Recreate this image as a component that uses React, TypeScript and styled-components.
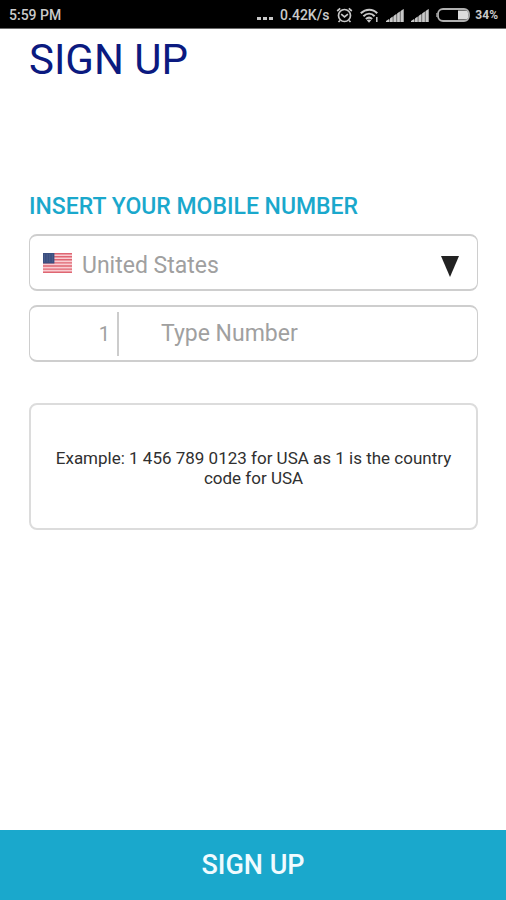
import React, { useState } from "react";
import styled, { createGlobalStyle } from "styled-components";

const GlobalStyle = createGlobalStyle`
  *, *::before, *::after { box-sizing: border-box; }
  body {
    margin: 0;
    background: #fff;
    font-family: Roboto, "Liberation Sans", sans-serif;
  }
`;

const Screen = styled.div`
  display: flex;
  flex-direction: column;
  min-height: 100vh;
  background: #fff;
`;

const StatusBar = styled.header`
  display: flex;
  align-items: center;
  justify-content: space-between;
  height: 29px;
  padding: 2px 8px 0 9px;
  border-bottom: 1px solid #6a6a6a;
  background: #000;
  color: #cacaca;
  font-size: 14px;
  font-weight: 500;
  line-height: 16px;
`;

const StatusGroup = styled.div`
  display: flex;
  align-items: center;
  gap: 7px;
`;

const StatusIcon = styled.svg`
  display: block;
  flex: none;
`;

const BatteryGroup = styled.div`
  display: flex;
  align-items: center;
  gap: 4px;
  font-size: 12px;
  font-weight: 700;
`;

const Content = styled.main`
  display: flex;
  flex: 1;
  flex-direction: column;
  padding: 0 28px 0 29px;
`;

const Title = styled.h1`
  margin: 5px 0 0;
  color: #0b1a80;
  font-size: 42px;
  font-weight: 400;
  line-height: 52px;
`;

const Form = styled.form`
  display: flex;
  flex-direction: column;
  margin-top: 105px;
`;

const SectionTitle = styled.h2`
  margin: 0;
  color: #1aa8cc;
  font-size: 23px;
  font-weight: 500;
  line-height: 32px;
`;

const Field = styled.div`
  display: flex;
  align-items: center;
  height: 57px;
  margin-top: 14px;
  padding: 0 18px 0 13px;
  border: solid #cecece;
  border-width: 2px 1px;
  border-radius: 8px;
`;

const CountryField = styled(Field)`
  margin-top: 11px;
`;

const CountrySelect = styled.select`
  flex: 1;
  min-width: 0;
  height: 52px;
  margin-left: 10px;
  padding: 6px 0 0;
  border: 0;
  outline: 0;
  appearance: none;
  background: transparent;
  color: #a0a0a0;
  font: 400 23px/32px Roboto, "Liberation Sans", sans-serif;
`;

const TextInput = styled.input`
  min-width: 0;
  height: 44px;
  padding: 0;
  border: 0;
  outline: 0;
  background: transparent;
  color: #a0a0a0;
  font: 400 23px/32px Roboto, "Liberation Sans", sans-serif;

  &::placeholder {
    color: #a0a0a0;
    opacity: 1;
  }
`;

const CodeInput = styled(TextInput)`
  width: 76px;
  padding-right: 7px;
  border-right: 2px solid #ccc;
  font-size: 20px;
  text-align: right;
`;

const NumberInput = styled(TextInput)`
  flex: 1;
  margin-left: 42px;
`;

const Example = styled.p`
  display: flex;
  align-items: center;
  justify-content: center;
  min-height: 127px;
  margin: 41px 0 0;
  padding: 2px 24px 0;
  border: 2px solid #dcdcdc;
  border-radius: 8px;
  color: #303030;
  font-size: 17px;
  line-height: 20px;
  text-align: center;
`;

const SubmitButton = styled.button`
  width: 100%;
  height: 70px;
  border: 0;
  background: #1aa8cc;
  color: #f0fbff;
  font: 500 27px/32px Roboto, "Liberation Sans", sans-serif;
  cursor: pointer;
`;

const AlarmIcon = () => (
  <StatusIcon width="17" height="17" viewBox="0 0 17 17" fill="none" stroke="#c8c8c8" strokeWidth="1.7" aria-hidden="true">
    <circle cx="8.5" cy="8.5" r="6" />
    <path d="M1.2 4 4.2 1.4M15.8 4l-3-2.6M5.2 7.2l3.3 2.7 3.4-2.7M4 13.500l-1.500 1.500M13 13.500l1.500 1.500" />
  </StatusIcon>
);

const WifiIcon = () => (
  <StatusIcon width="19" height="15" viewBox="0 0 19 15" fill="none" stroke="#c8c8c8" strokeWidth="2.1" aria-hidden="true">
    <path d="M.8 5.200c5-4.700 12-4.700 16.400 0M3.400 8.200c3.500-3.300 8-3.300 11.200 0M5.900 11c2-1.800 4.300-1.800 6.200 0" />
    <path d="M6.800 12.200q2.200-1.600 4.400 0L9 14.800z" fill="#c8c8c8" stroke="none" />
    <path d="M16.800 9v5" strokeWidth="1.500" />
  </StatusIcon>
);

const SignalIcon = () => (
  <StatusIcon width="18" height="13" viewBox="0 0 18 13" fill="#c8c8c8" aria-hidden="true">
    <path d="M0 13 17.600 0v13z" fill="#6c6c6c" />
    <path d="M0 13V12l3-2v3zM4 13V9.500l2.600-1.900V13zM7.600 13V7l2.600-1.900V13zM11.200 13V4.500l2.600-1.900V13zM14.800 13V2L17.600 0v13z" />
  </StatusIcon>
);

const BatteryIcon = () => (
  <StatusIcon width="35" height="14" viewBox="0 0 35 14" aria-hidden="true">
    <rect x="2" y="1" width="31" height="12" rx="5" fill="#000" stroke="#b0b0b0" strokeWidth="1.8" />
    <path d="M22 2.500h7.500q2.500 0 2.500 2v5q0 2-2.500 2H22z" fill="#ddd" />
    <path d="M.2 5h1.800v4H.2z" fill="#999" />
  </StatusIcon>
);

const DotsIcon = () => (
  <StatusIcon width="16" height="13" viewBox="0 0 16 13" fill="#c8c8c8" aria-hidden="true">
    <path d="M0 8h4v3H0zM6 8h4v3H6zM12 8h4v3h-4z" />
  </StatusIcon>
);

const FlagIcon = () => (
  <StatusIcon width="29" height="20" viewBox="0 0 28 20" preserveAspectRatio="none" aria-hidden="true">
    <path fill="#f9cdd2" d="M0 0h28v20H0z" />
    <path
      stroke="#df6672"
      strokeWidth="1.4"
      d="M0 .8h28M0 3.800h28M0 6.800h28M0 9.900h28M0 13h28M0 16.100h28M0 19.200h28"
    />
    <path fill="#3b4f80" d="M0 0h11v10.500H0z" />
    <path stroke="#62739b" strokeDasharray="1 1.500" d="M1 2h9.500M1 4h9.500M1 6h9.500M1 8h9.500" strokeWidth=".8" />
  </StatusIcon>
);

const Arrow = styled(StatusIcon)`
  margin-top: 8px;
`;

const ArrowIcon = () => (
  <Arrow width="18" height="21" viewBox="0 0 18 21" aria-hidden="true">
    <path d="M0 0h18L9 21z" fill="#222" />
  </Arrow>
);

export default function App() {
  const [country, setCountry] = useState("us");
  const [code, setCode] = useState("1");
  const [number, setNumber] = useState("");

  return (
    <>
      <GlobalStyle />
      <Screen>
        <StatusBar>
          <span>5:59 PM</span>
          <StatusGroup>
            <DotsIcon />
            <span>0.42K/s</span>
            <AlarmIcon />
            <WifiIcon />
            <SignalIcon />
            <SignalIcon />
            <BatteryGroup>
              <BatteryIcon />
              <span>34%</span>
            </BatteryGroup>
          </StatusGroup>
        </StatusBar>
        <Content>
          <Title>SIGN UP</Title>
          <Form id="signup" onSubmit={(e) => e.preventDefault()}>
            <SectionTitle>INSERT YOUR MOBILE NUMBER</SectionTitle>
            <CountryField>
              <FlagIcon />
              <CountrySelect aria-label="Country" value={country} onChange={(e) => setCountry(e.target.value)}>
                <option value="us">United States</option>
              </CountrySelect>
              <ArrowIcon />
            </CountryField>
            <Field>
              <CodeInput aria-label="Country code" type="tel" value={code} onChange={(e) => setCode(e.target.value)} />
              <NumberInput
                aria-label="Mobile number"
                type="tel"
                placeholder="Type Number"
                value={number}
                onChange={(e) => setNumber(e.target.value)}
              />
            </Field>
            <Example>Example: 1 456 789 0123 for USA as 1 is the country code for USA</Example>
          </Form>
        </Content>
        <SubmitButton type="submit" form="signup">SIGN UP</SubmitButton>
      </Screen>
    </>
  );
}
